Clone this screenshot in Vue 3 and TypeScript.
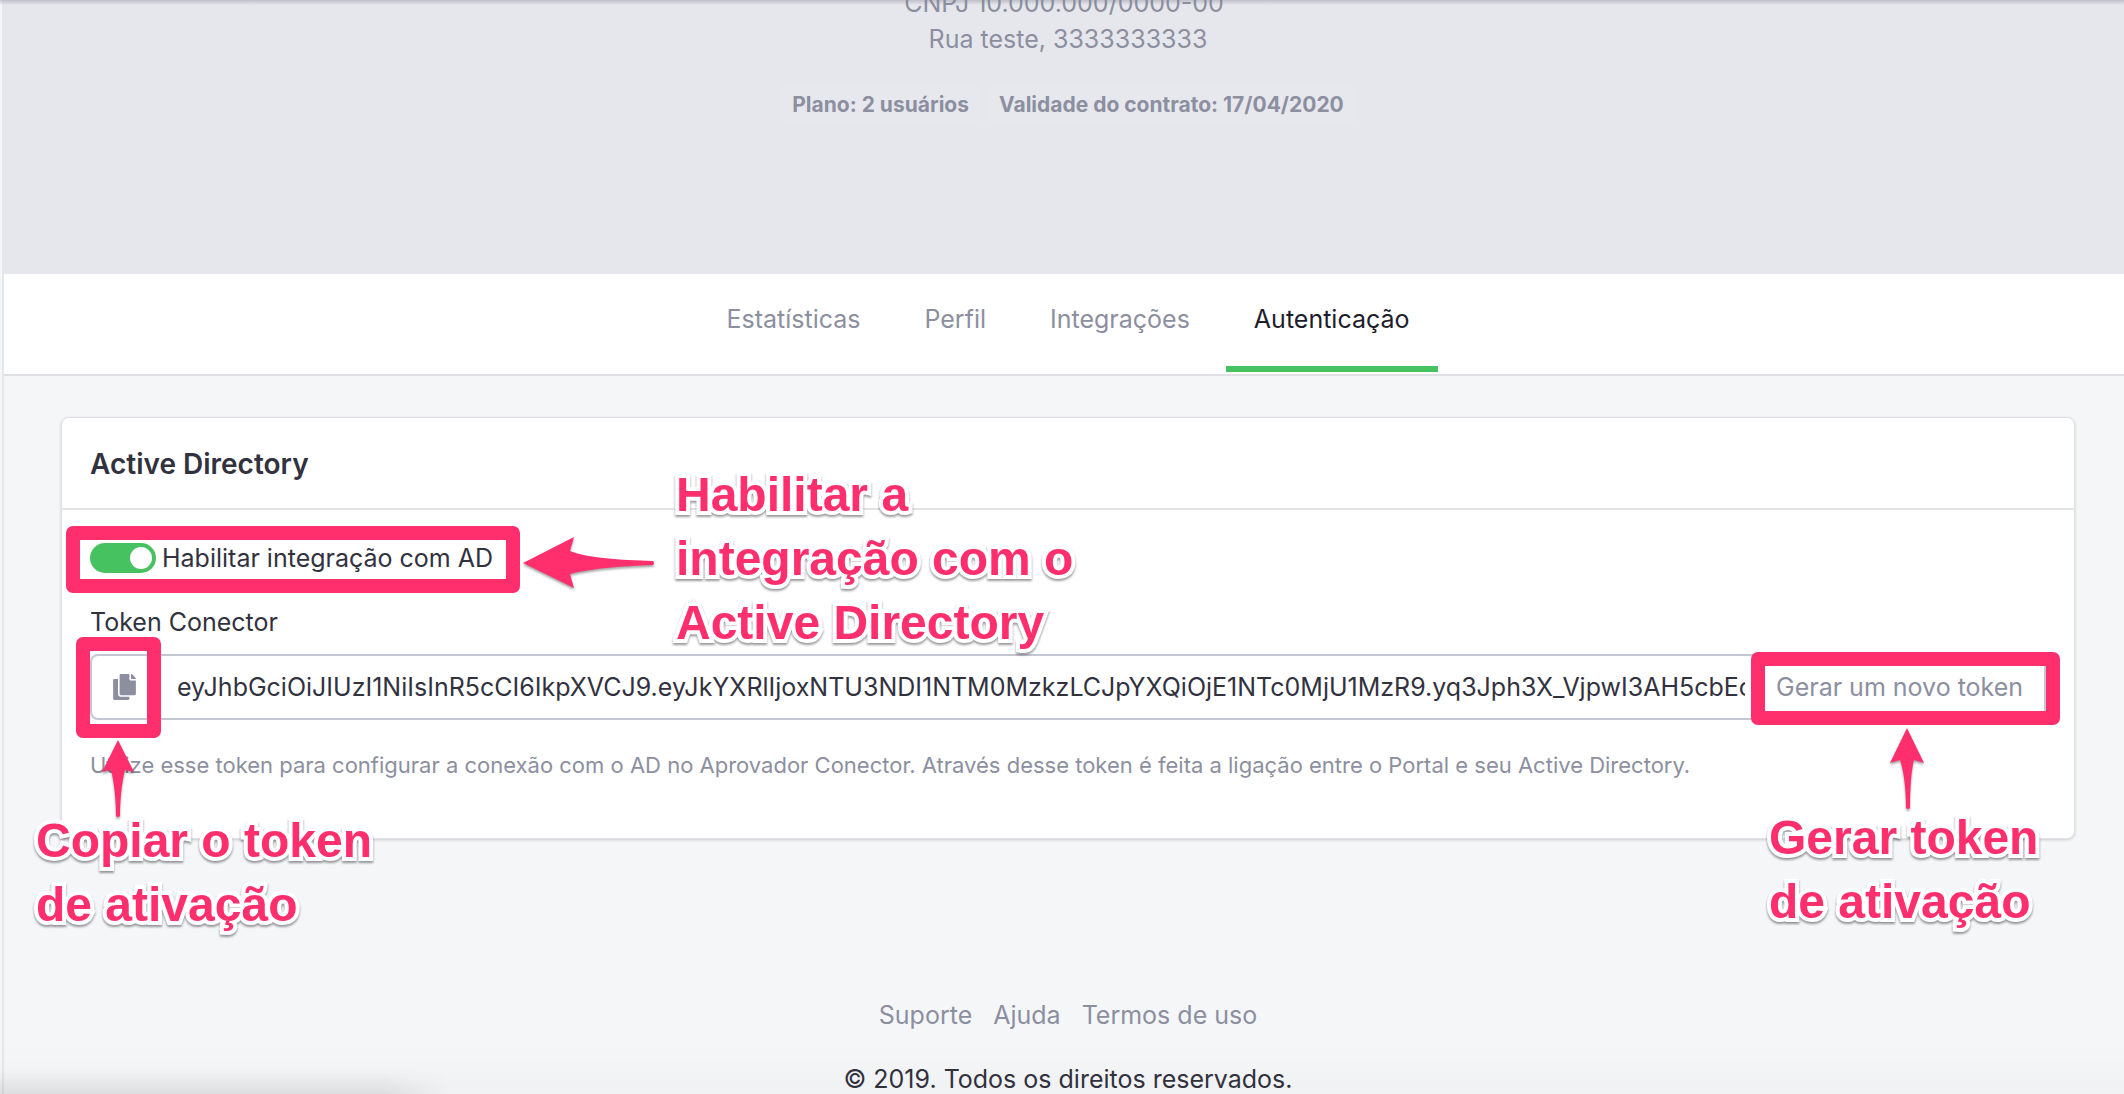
<script setup lang="ts">
import { ref } from 'vue'

interface Tab {
  label: string
  active?: boolean
}

const tabs: Tab[] = [
  { label: 'Estatísticas' },
  { label: 'Perfil' },
  { label: 'Integrações' },
  { label: 'Autenticação', active: true },
]

const badges: string[] = ['Plano: 2 usuários', 'Validade do contrato: 17/04/2020']
const links: string[] = ['Suporte', 'Ajuda', 'Termos de uso']

const enabled = ref(true)
const token = ref(
  'eyJhbGciOiJIUzI1NiIsInR5cCI6IkpXVCJ9.eyJkYXRlIjoxNTU3NDI1NTM0MzkzLCJpYXQiOjE1NTc0MjU1MzR9.yq3Jph3X_VjpwI3AH5cbEc',
)
</script>

<template>
  <div class="page">
    <div class="rail"></div>
    <div class="content">
      <header class="hero">
        <p class="company">CNPJ 10.000.000/0000-00</p>
        <p class="address">Rua teste, 3333333333</p>
        <div class="badges">
          <span v-for="badge in badges" :key="badge" class="badge">{{ badge }}</span>
        </div>
      </header>

      <nav class="tabs">
        <a
          v-for="tab in tabs"
          :key="tab.label"
          href="#"
          class="tab"
          :class="{ active: tab.active }"
          >{{ tab.label }}</a
        >
      </nav>

      <main class="main">
        <section class="card">
          <h2 class="card-title">Active Directory</h2>
          <div class="card-body">
            <div class="toggle-row">
              <input id="enable-ad" v-model="enabled" type="checkbox" class="switch" />
              <label for="enable-ad">Habilitar integração com AD</label>
              <span class="frame frame-toggle"></span>
              <svg class="arrow arrow-toggle" width="136" height="56" viewBox="0 0 136 56">
                <path d="M1 28 L52 2 L48 16 C66 23 98 25 131 26 Q133 28 131 30 C98 31 66 34 48 39 L52 53 Z" />
              </svg>
              <p class="note note-toggle">Habilitar a<br />integração com o<br />Active Directory</p>
            </div>

            <label for="token" class="field-label">Token Conector</label>
            <div class="group">
              <div class="copy-slot">
                <button type="button" class="copy" aria-label="Copiar">
                  <svg width="23" height="26" viewBox="0 0 448 512">
                    <path
                      fill="currentColor"
                      d="M320 448v40c0 13.255-10.745 24-24 24H24c-13.255 0-24-10.745-24-24V120c0-13.255 10.745-24 24-24h72v296c0 30.879 25.121 56 56 56h168zm0-344V0H152c-13.255 0-24 10.745-24 24v368c0 13.255 10.745 24 24 24h272c13.255 0 24-10.745 24-24V128H344c-13.200 0-24-10.800-24-24zm120.971-31.029L375.029 7.029A24 24 0 0 0 358.059 0H352v96h96v-6.059a24 24 0 0 0-7.029-16.970z"
                    />
                  </svg>
                </button>
                <span class="frame frame-copy"></span>
                <svg class="arrow arrow-copy" width="40" height="82" viewBox="0 0 40 82">
                  <path d="M20 1 L36 33 L27 31 C24 42 22 60 22 77 Q20 79 18 77 C18 60 16 42 13 31 L4 33 Z" />
                </svg>
                <p class="note note-copy">Copiar o token<br />de ativação</p>
              </div>
              <input id="token" v-model="token" type="text" class="token" readonly />
              <div class="generate-slot">
                <button type="button" class="generate">Gerar um novo token</button>
                <span class="frame frame-generate"></span>
                <svg class="arrow arrow-generate" width="40" height="86" viewBox="0 0 40 86">
                  <path d="M19 1 L36 36 L26 33 C23 44 22 64 22 81 Q20 83 18 81 C18 64 16 44 12 33 L2 36 Z" />
                </svg>
                <p class="note note-generate">Gerar token<br />de ativação</p>
              </div>
            </div>

            <p class="help">
              Utilize esse token para configurar a conexão com o AD no Aprovador Conector. Através desse
              token é feita a ligação entre o Portal e seu Active Directory.
            </p>
          </div>
        </section>
      </main>

      <footer class="footer">
        <div class="links">
          <a v-for="link in links" :key="link" href="#">{{ link }}</a>
        </div>
        <p class="copyright">© 2019. Todos os direitos reservados.</p>
      </footer>
    </div>
    <div class="top-shade"></div>
    <div class="bottom-shade"></div>
    <div class="status-shade"></div>
  </div>
</template>

<style>
body {
  margin: 0;
  background: #f5f6f8;
}
</style>

<style scoped>
.page {
  position: relative;
  display: flex;
  height: 100vh;
  overflow: hidden;
  font-family: Inter, 'Liberation Sans', sans-serif;
  font-size: 25px;
  line-height: 32px;
  color: #32323f;
  background: #f5f6f8;
}
.page * {
  box-sizing: border-box;
}
p,
h2 {
  margin: 0;
}
a {
  color: #8c8fa0;
  text-decoration: none;
}
.rail {
  flex: none;
  width: 4px;
  background: #f5f6f8;
  border-right: 2px solid #e6e7ea;
}
.content {
  flex: 1;
  min-width: 0;
}
.hero {
  height: 274px;
  padding-left: 8px;
  overflow: hidden;
  background: #e6e7ec;
  color: #8c8fa0;
  text-align: center;
}
.company {
  margin-top: -15px;
  padding-right: 8px;
  line-height: 36px;
}
.address {
  line-height: 36px;
}
.badges {
  display: flex;
  justify-content: center;
  gap: 8px;
  margin-top: 29px;
}
.badge {
  padding: 0 11px;
  border-radius: 6px;
  background: #e7e8ed;
  font-size: 21px;
  line-height: 38px;
  font-weight: 700;
}
.tabs {
  display: flex;
  justify-content: center;
  gap: 8px;
  padding: 0 0 2px 8px;
  background: #fff;
  border-bottom: 2px solid #dfe1e5;
}
.tab {
  padding: 29px 28px 31px;
  border-bottom: 6px solid transparent;
}
.tab.active {
  color: #1d1d2c;
  border-bottom-color: #47c260;
}
.main {
  padding: 41px 49px 0 57px;
}
.card {
  background: #fff;
  border: 1px solid #e0e1e7;
  border-radius: 8px;
  box-shadow: 0 1px 3px rgba(40, 40, 60, 0.2);
}
.card-title {
  padding: 28px 28px 26px;
  border-bottom: 2px solid #e2e3e5;
  font-size: 28px;
  line-height: 36px;
  font-weight: 600;
}
.card-body {
  padding: 32px 28px 58px;
}
.toggle-row {
  position: relative;
  display: flex;
  align-items: center;
  gap: 6px;
}
.switch {
  appearance: none;
  width: 66px;
  height: 30px;
  margin: 0;
  padding: 4px;
  border-radius: 15px;
  background: #c4c6d2;
}
.switch::before {
  content: '';
  display: block;
  width: 22px;
  height: 22px;
  border-radius: 50%;
  background: #fff;
}
.switch:checked {
  background: #47c260;
}
.switch:checked::before {
  margin-left: auto;
}
.field-label {
  display: block;
  margin-top: 32px;
}
.group {
  display: flex;
  height: 66px;
  margin-top: 16px;
  border: 2px solid #c4c6d4;
  border-radius: 8px;
}
.copy-slot,
.generate-slot {
  position: relative;
  display: flex;
  flex: none;
}
button {
  margin: 0;
  border: 0;
  background: none;
  font: inherit;
  color: #8c8fa0;
}
.copy {
  display: flex;
  align-items: center;
  justify-content: center;
  width: 65px;
  padding: 0;
}
.token {
  flex: 1;
  min-width: 0;
  margin: 0 5px 0 20px;
  padding: 0;
  border: 0;
  background: none;
  font: inherit;
  color: inherit;
  outline: 0;
}
.generate {
  width: 294px;
  padding: 0 22px 0 26px;
  text-align: left;
  white-space: nowrap;
}
.help {
  margin-top: 30px;
  font-size: 22px;
  line-height: 30px;
  color: #8c8fa0;
}
.footer {
  padding: 160px 0 0 8px;
  text-align: center;
}
.links {
  display: flex;
  justify-content: center;
  gap: 21px;
}
.copyright {
  margin-top: 32px;
}

/* Tutorial callouts, laid over the control each one explains */
.frame {
  position: absolute;
  z-index: 1;
  border: 14px solid #ff2f6d;
  border-radius: 7px;
  pointer-events: none;
}
.frame-toggle {
  left: -24px;
  top: -16px;
  width: 454px;
  height: 67px;
}
.frame-copy {
  left: -16px;
  top: -19px;
  width: 85px;
  height: 101px;
}
.frame-generate {
  right: -16px;
  top: -4px;
  width: 309px;
  height: 73px;
}
.arrow {
  position: absolute;
  z-index: 1;
  fill: #ff2f6d;
  filter: drop-shadow(0 2px 1px rgba(0, 0, 0, 0.35));
}
.arrow-toggle {
  left: 432px;
  top: -7px;
}
.arrow-copy {
  left: 6px;
  top: 83px;
}
.arrow-generate {
  left: 138px;
  top: 71px;
}
.note {
  position: absolute;
  z-index: 2;
  font-family: 'Liberation Sans', Arial, sans-serif;
  font-size: 48px;
  line-height: 64px;
  font-weight: 700;
  white-space: nowrap;
  color: #ff2f6d;
  -webkit-text-stroke: 8px #fff;
  stroke-linejoin: round;
  paint-order: stroke fill;
  filter: drop-shadow(0 2px 1px rgba(0, 0, 0, 0.4));
}
.note-toggle {
  left: 586px;
  top: -79px;
}
.note-copy {
  left: -56px;
  top: 153px;
}
.note-generate {
  left: 19px;
  top: 150px;
}

/* Window edges */
.top-shade,
.bottom-shade,
.status-shade {
  position: absolute;
  left: 0;
  pointer-events: none;
}
.top-shade {
  top: 0;
  right: 0;
  height: 5px;
  background: linear-gradient(rgba(130, 130, 150, 0.4), rgba(130, 130, 150, 0));
}
.bottom-shade {
  bottom: 0;
  right: 0;
  height: 50px;
  background: linear-gradient(rgba(0, 0, 0, 0), rgba(0, 0, 0, 0.02));
}
.status-shade {
  bottom: 0;
  width: 450px;
  height: 24px;
  background: linear-gradient(rgba(0, 0, 0, 0), rgba(0, 0, 0, 0.08));
  mask-image: linear-gradient(to right, #000 85%, transparent);
}
</style>
